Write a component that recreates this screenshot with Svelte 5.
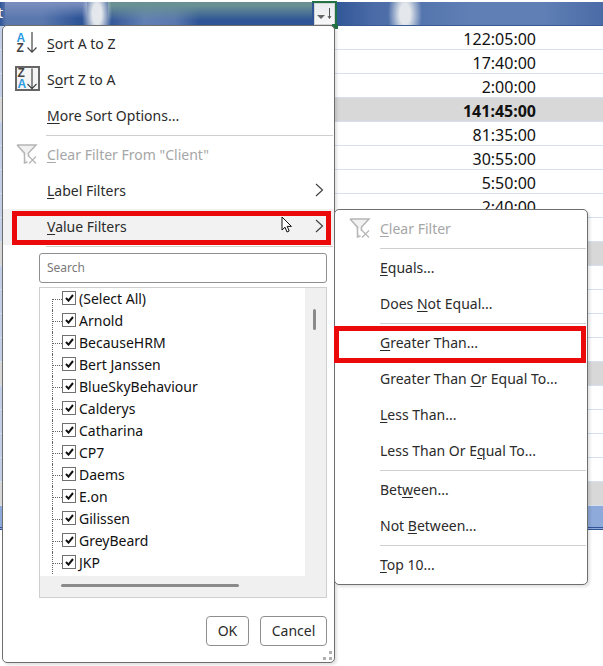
<script lang="ts">
  const rows = [
    { value: "122:05:00" },
    { value: "17:40:00" },
    { value: "2:00:00" },
    { value: "141:45:00", kind: "total" },
    { value: "81:35:00" },
    { value: "30:55:00" },
    { value: "5:50:00" },
    { value: "2:40:00" },
    { value: "" },
    { value: "", kind: "sub" },
    { value: "" },
    { value: "" },
    { value: "" },
    { value: "" },
    { value: "", kind: "sub" },
    { value: "" },
    { value: "" },
    { value: "" },
    { value: "" },
    { value: "", kind: "sub" },
    { value: "", kind: "grand" },
  ];

  const clients = [
    "(Select All)",
    "Arnold",
    "BecauseHRM",
    "Bert Janssen",
    "BlueSkyBehaviour",
    "Calderys",
    "Catharina",
    "CP7",
    "Daems",
    "E.on",
    "Gilissen",
    "GreyBeard",
    "JKP",
  ];
</script>

<div class="page">
  <div class="sheet">
    <div class="sheet-head"><span class="head-text">t</span></div>
    {#each rows as row}
      <div class="sheet-row {row.kind ?? ''}">{row.value}</div>
    {/each}
  </div>

  <div class="cell-select">
    <div class="drop-btn">
      <span class="tri"></span>
      <svg width="7" height="14" viewBox="0 0 7 14"><path d="M3.500 1v10M2 9l1.500 2.500L5 9" fill="none" stroke="#555" stroke-width="1" /></svg>
    </div>
    <span class="handle"></span>
  </div>

  <div class="menu main-menu">
    <div class="item">
      <svg class="icon" width="24" height="24" viewBox="0 0 24 24">
        <text x="1.500" y="9.500" class="az blue">A</text>
        <text x="1.500" y="20" class="az dark">Z</text>
        <path d="M17 0v20M12.500 15.500l4.500 4.700 4.500-4.700" fill="none" stroke="#444" stroke-width="1.200" />
      </svg>
      <span><u>S</u>ort A to Z</span>
    </div>
    <div class="item">
      <svg class="icon boxed" width="25" height="25" viewBox="0 0 25 25">
        <rect x="1" y="1" width="23" height="23" fill="#f4f4f4" stroke="#666" stroke-width="2" />
        <text x="2.500" y="10.500" class="az dark">Z</text>
        <text x="2.500" y="22" class="az blue">A</text>
        <path d="M17 2.500v20M12.500 18l4.500 4.700 4.500-4.700" fill="none" stroke="#444" stroke-width="1.200" />
      </svg>
      <span>S<u>o</u>rt Z to A</span>
    </div>
    <div class="item"><span><u>M</u>ore Sort Options...</span></div>
    <div class="sep"></div>
    <div class="item off">
      <svg class="icon" width="24" height="24" viewBox="0 0 24 24">
        <path d="M2 2h19l-7.500 8v4M2 2l7.500 8v10l3-1" fill="#f1f1f1" stroke="#b5b5b5" stroke-width="1.500" />
        <path d="M14 13.500l7 7M21 13.500l-7 7" stroke="#b5b5b5" stroke-width="1.200" />
      </svg>
      <span><u>C</u>lear Filter From "Client"</span>
    </div>
    <div class="item">
      <span><u>L</u>abel Filters</span>
      <svg class="chev" width="9" height="14" viewBox="0 0 9 14"><path d="M1 1l6.500 6L1 13" fill="none" stroke="#444" stroke-width="1.200" /></svg>
    </div>
    <div class="item active">
      <span><u>V</u>alue Filters</span>
      <svg class="chev" width="9" height="14" viewBox="0 0 9 14"><path d="M1 1l6.500 6L1 13" fill="none" stroke="#444" stroke-width="1.200" /></svg>
      <span class="red-box value-box"></span>
      <svg class="cursor" width="13" height="18" viewBox="0 0 13 18"><path d="M1 1v13l3-2.800 2 4.800 2.200-1-2-4.600h4.200z" fill="#fff" stroke="#111" stroke-width="1" /></svg>
    </div>
    <div class="sep"></div>

    <div class="filter">
      <div class="search">Search</div>
      <div class="list">
        <div class="list-scroll">
          <div class="tree">
            {#each clients as name}
              <div class="node">
                <span class="dots"></span>
                <span class="check">
                  <svg width="9" height="8" viewBox="0 0 9 8"><path d="M1 4l2.500 2.600L8 1" fill="none" stroke="#111" stroke-width="2" /></svg>
                </span>
                <span class="name">{name}</span>
              </div>
            {/each}
          </div>
          <div class="vbar"><span class="vthumb"></span></div>
        </div>
        <div class="hbar"><span class="hthumb"></span></div>
      </div>
      <div class="actions">
        <div class="btn ok">OK</div>
        <div class="btn cancel">Cancel</div>
      </div>
    </div>
    <svg class="grip" width="11" height="11" viewBox="0 0 11 11" fill="#b0b0b0">
      <rect x="6" y="0" width="3" height="3" />
      <rect x="0" y="6" width="3" height="3" />
      <rect x="6" y="6" width="3" height="3" />
    </svg>
  </div>

  <div class="menu sub-menu">
    <div class="item off">
      <svg class="icon" width="24" height="24" viewBox="0 0 24 24">
        <path d="M2 2h19l-7.500 8v4M2 2l7.500 8v10l3-1" fill="#f1f1f1" stroke="#b5b5b5" stroke-width="1.500" />
        <path d="M14 13.500l7 7M21 13.500l-7 7" stroke="#b5b5b5" stroke-width="1.200" />
      </svg>
      <span><u>C</u>lear Filter</span>
    </div>
    <div class="sep"></div>
    <div class="item"><span><u>E</u>quals...</span></div>
    <div class="item"><span>Does <u>N</u>ot Equal...</span></div>
    <div class="sep"></div>
    <div class="item">
      <span><u>G</u>reater Than...</span>
      <span class="red-box greater-box"></span>
    </div>
    <div class="item"><span>Greater Than <u>O</u>r Equal To...</span></div>
    <div class="item"><span><u>L</u>ess Than...</span></div>
    <div class="item"><span>Less Than Or E<u>q</u>ual To...</span></div>
    <div class="sep"></div>
    <div class="item"><span>Bet<u>w</u>een...</span></div>
    <div class="item"><span>Not <u>B</u>etween...</span></div>
    <div class="sep"></div>
    <div class="item"><span><u>T</u>op 10...</span></div>
  </div>
</div>

<style>
  :global(body) {
    background: #fff;
  }
  .page {
    position: relative;
    width: 603px;
    height: 666px;
    overflow: hidden;
    font-family: "Noto Sans", "Open Sans", sans-serif;
    font-size: 14px;
    color: #2b2b2b;
  }

  .sheet-head {
    margin-top: 2px;
    height: 23px;
    overflow: hidden;
    border-bottom: 1px solid #3a5a94;
    /* blurred out column titles */
    background:
      radial-gradient(ellipse 15px 34px at 97px 12px, rgba(228, 232, 236, 1) 30%, rgba(228, 232, 236, 0) 100%),
      radial-gradient(ellipse 17px 34px at 405px 12px, rgba(228, 232, 236, 1) 30%, rgba(228, 232, 236, 0) 100%),
      linear-gradient(180deg, rgba(105, 145, 148, 1) 15%, rgba(105, 145, 148, 0) 80%) 108px 0 / 204px 100% no-repeat,
      linear-gradient(180deg, rgba(122, 142, 190, 0.95) 10%, rgba(122, 142, 190, 0) 70%) 5px 0 / 82px 100% no-repeat,
      linear-gradient(90deg, #2f5597 0, #5a78ae 1%, #5a78ae 7%, #2f5597 13%, #2f5597 18%, #3a5c9b 19%, #6280b4 24%, #5a78ae 29%, #2f5597 33%, #2f5597 55%, #4a6ba6 62%, #5f7fb5 78%, #5f7fb5 90%, #4a6ba6 100%);
  }
  .head-text {
    display: block;
    margin-left: -2px;
    font-size: 14px;
    line-height: 22px;
    color: #fff;
  }
  .sheet-row {
    box-sizing: border-box;
    height: 24px;
    padding-right: 67px;
    border-bottom: 1px solid #d5e0f1;
    background: linear-gradient(90deg, #c2cfe6 3px, transparent 3px);
    font-size: 16px;
    line-height: 26px;
    text-align: right;
    color: #111;
  }
  .total,
  .sub {
    background: #d8d8d8;
  }
  .total {
    font-weight: 700;
  }
  .grand {
    background: #8eaadb;
    border-bottom: 3px double #2f5597;
  }

  .cell-select {
    position: absolute;
    left: 312px;
    top: 1px;
    width: 21px;
    height: 22px;
    padding-left: 2px;
    border-top: 2px solid #217346;
    border-right: 2px solid #217346;
  }
  .drop-btn {
    display: flex;
    align-items: center;
    justify-content: center;
    gap: 1px;
    height: 22px;
    background: linear-gradient(#e8ebef, #f8f8f8);
    border: 1px solid #d4d4d4;
    box-sizing: border-box;
  }
  .tri {
    width: 0;
    height: 0;
    margin-top: 6px;
    border: 4px solid transparent;
    border-top: 4px solid #666;
    border-bottom: 0;
  }
  .handle {
    position: absolute;
    right: -3px;
    bottom: -4px;
    width: 6px;
    height: 5px;
    background: #217346;
  }

  .menu {
    position: absolute;
    box-sizing: border-box;
    background: #fff;
    border: 1px solid #6e6e6e;
    border-radius: 5px;
    box-shadow: 2px 2px 3px rgba(0, 0, 0, 0.12);
  }
  .main-menu {
    left: 2px;
    top: 25px;
    width: 333px;
    height: 638px;
  }
  .sub-menu {
    left: 334px;
    top: 209px;
    width: 254px;
    height: 376px;
    padding-top: 1px;
  }

  .item {
    position: relative;
    display: flex;
    align-items: center;
    box-sizing: border-box;
    height: 36px;
    padding-left: 44px;
    padding-bottom: 2px;
    white-space: nowrap;
  }
  .sub-menu .item {
    padding-left: 45px;
  }
  .item u {
    text-underline-offset: 2px;
    text-decoration-thickness: 1px;
  }
  .off {
    color: #a6a6a6;
  }
  .active {
    background: #f2f2f2;
  }
  .icon {
    position: absolute;
    left: 12px;
    top: 6px;
  }
  .boxed {
    top: 4px;
  }
  .sub-menu .icon {
    left: 13px;
  }
  .az {
    font-family: "Liberation Sans", sans-serif;
    font-size: 12px;
    font-weight: 700;
  }
  .blue {
    fill: #2b9be0;
  }
  .dark {
    fill: #444;
  }
  .chev {
    position: absolute;
    right: 10px;
    top: 10px;
  }
  .sep {
    height: 1px;
    margin: 1px 1px 1px 43px;
    background: #cfcfcf;
  }
  .sub-menu .sep {
    margin-left: 45px;
  }
  .red-box {
    position: absolute;
    box-sizing: border-box;
    pointer-events: none;
    border: 5px solid #ea0a0a;
  }
  .value-box {
    left: 9px;
    top: 2px;
    width: 319px;
    height: 34px;
  }
  .greater-box {
    left: -1px;
    top: 1px;
    width: 252px;
    height: 37px;
  }
  .cursor {
    position: absolute;
    left: 278px;
    top: 7px;
  }

  .filter {
    padding: 5px 7px 0 36px;
  }
  .search {
    box-sizing: border-box;
    height: 30px;
    padding-left: 7px;
    border: 1px solid #8f8f8f;
    border-radius: 3px;
    font-size: 12px;
    line-height: 28px;
    color: #7a7a7a;
  }
  .list {
    box-sizing: border-box;
    height: 311px;
    margin-top: 4px;
    border: 1px solid #cfcfcf;
    background: #f0f0f0;
  }
  .list-scroll {
    display: flex;
    height: 288px;
  }
  .tree {
    flex: 1;
    overflow: hidden;
    background: #fff;
  }
  .node {
    position: relative;
    display: flex;
    align-items: center;
    height: 22px;
    padding-left: 13px;
  }
  .dots {
    width: 9px;
    border-top: 1px dotted #666;
  }
  .node::before {
    content: "";
    position: absolute;
    left: 12px;
    top: 0;
    bottom: 0;
    border-left: 1px dotted #666;
  }
  .node:first-child::before {
    top: 11px;
  }
  .check {
    display: flex;
    align-items: center;
    justify-content: center;
    box-sizing: border-box;
    width: 14px;
    height: 14px;
    margin-top: -3px;
    border: 1px solid #707070;
    background: #fff;
  }
  .name {
    margin: -2px 0 0 3px;
    font-size: 14px;
    color: #111;
  }
  .vbar {
    position: relative;
    width: 21px;
  }
  .vthumb {
    position: absolute;
    left: 8px;
    top: 21px;
    width: 3px;
    height: 21px;
    border-radius: 2px;
    background: #8a8a8a;
  }
  .hbar {
    position: relative;
    height: 21px;
  }
  .hthumb {
    position: absolute;
    left: 21px;
    top: 8px;
    width: 178px;
    height: 3px;
    border-radius: 2px;
    background: #8a8a8a;
  }
  .actions {
    display: flex;
    justify-content: flex-end;
    gap: 11px;
    margin-top: 18px;
  }
  .btn {
    box-sizing: border-box;
    height: 30px;
    border: 1px solid #8f8f8f;
    border-radius: 4px;
    line-height: 28px;
    text-align: center;
  }
  .ok {
    width: 43px;
  }
  .cancel {
    width: 67px;
  }
  .grip {
    position: absolute;
    right: 0;
    bottom: 0;
  }
</style>
